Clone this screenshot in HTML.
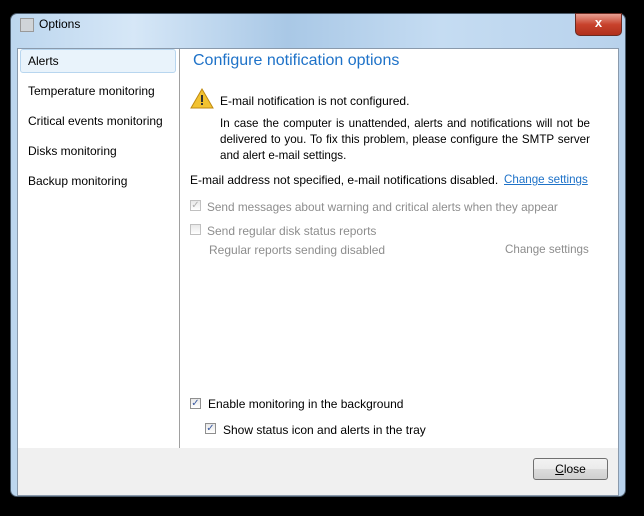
<html><head><style>
body{margin:0;width:644px;height:516px;background:#000;position:relative;overflow:hidden;font-family:"Liberation Sans",sans-serif;font-size:12px;color:#000}
.a{position:absolute}
.frame{left:10px;top:13px;width:616px;height:484px;border-radius:7px;background:linear-gradient(90deg,#bcd6ee 0%,#d6e7f7 20%,#a9c8e6 45%,#c5dcf2 70%,#b8d2ec 100%);border:1px solid #4a5a6a;box-sizing:border-box}
.t{white-space:nowrap}
.g{color:#8d8d8d}
.cb{width:11px;height:11px;border:1px solid #8f8f8f;background:linear-gradient(#e8e8e8,#fff);box-sizing:border-box;font-size:10px;line-height:9px;text-align:center;color:#3a5aa0}
.cbg{border-color:#c0c0c0;color:#b0b0b0}
</style></head><body>
<div class="a frame"></div>
<div class="a" style="left:20px;top:18px;width:12px;height:12px;background:#d0d4d8;border:1px solid #999"></div>
<div class="a t" style="left:39px;top:17px;font-size:12px">Options</div>
<div class="a" style="left:575px;top:13px;width:47px;height:23px;border-radius:0 0 5px 5px;background:linear-gradient(#e8a093,#c8422c 50%,#b0301c);border:1px solid #6a2b22;box-sizing:border-box;color:#fff;font-weight:bold;text-align:center;line-height:18px;font-size:13px">x</div>
<div class="a" style="left:17px;top:48px;width:602px;height:448px;background:#f0f0f0;border:1px solid #8a9aac;box-sizing:border-box"></div>
<div class="a" style="left:18px;top:49px;width:600px;height:399px;background:#fff"></div>
<div class="a" style="left:179px;top:49px;width:1px;height:399px;background:#a0a0a0"></div>
<div class="a" style="left:20px;top:49px;width:156px;height:24px;border:1px solid #b8d6ef;border-radius:3px;background:#e9f3fb;box-sizing:border-box"></div>
<div class="a t" style="left:28px;top:54px">Alerts</div>
<div class="a t" style="left:28px;top:84px">Temperature monitoring</div>
<div class="a t" style="left:28px;top:114px">Critical events monitoring</div>
<div class="a t" style="left:28px;top:144px">Disks monitoring</div>
<div class="a t" style="left:28px;top:174px">Backup monitoring</div>
<div class="a t" style="left:193px;top:52px;font-size:16px;color:#1e72c8">Configure notification options</div>
<svg class="a" style="left:190px;top:88px" width="24" height="21"><path d="M12 1 L23 20 H1 Z" fill="#f2c230" stroke="#c08a10"/><rect x="11" y="7" width="2" height="7" fill="#333"/><rect x="11" y="15" width="2" height="2" fill="#333"/></svg>
<div class="a t" style="left:220px;top:94px">E-mail notification is not configured.</div>
<div class="a" style="left:220px;top:116px;width:370px;line-height:16px;text-align:justify;font-size:11.6px">In case the computer is unattended, alerts and notifications will not be delivered to you. To fix this problem, please configure the SMTP server and alert e-mail settings.</div>
<div class="a t" style="left:190px;top:173px">E-mail address not specified, e-mail notifications disabled.</div>
<div class="a t" style="left:504px;top:173px;color:#1e72c8;text-decoration:underline;font-size:11.6px">Change settings</div>
<div class="a cb cbg" style="left:190px;top:200px">✓</div>
<div class="a t g" style="left:207px;top:200px;font-size:11.8px">Send messages about warning and critical alerts when they appear</div>
<div class="a cb cbg" style="left:190px;top:224px"></div>
<div class="a t g" style="left:207px;top:224px">Send regular disk status reports</div>
<div class="a t g" style="left:209px;top:243px">Regular reports sending disabled</div>
<div class="a t g" style="left:505px;top:243px;font-size:11.6px">Change settings</div>
<div class="a cb" style="left:190px;top:398px">✓</div>
<div class="a t" style="left:208px;top:397px">Enable monitoring in the background</div>
<div class="a cb" style="left:205px;top:423px">✓</div>
<div class="a t" style="left:223px;top:423px">Show status icon and alerts in the tray</div>
<div class="a" style="left:533px;top:458px;width:75px;height:22px;border:1px solid #707070;border-radius:3px;background:linear-gradient(#f2f2f2,#ebebeb 50%,#dcdcdc 51%,#cfcfcf);box-sizing:border-box;text-align:center;line-height:20px"><u>C</u>lose</div>
</body></html>
